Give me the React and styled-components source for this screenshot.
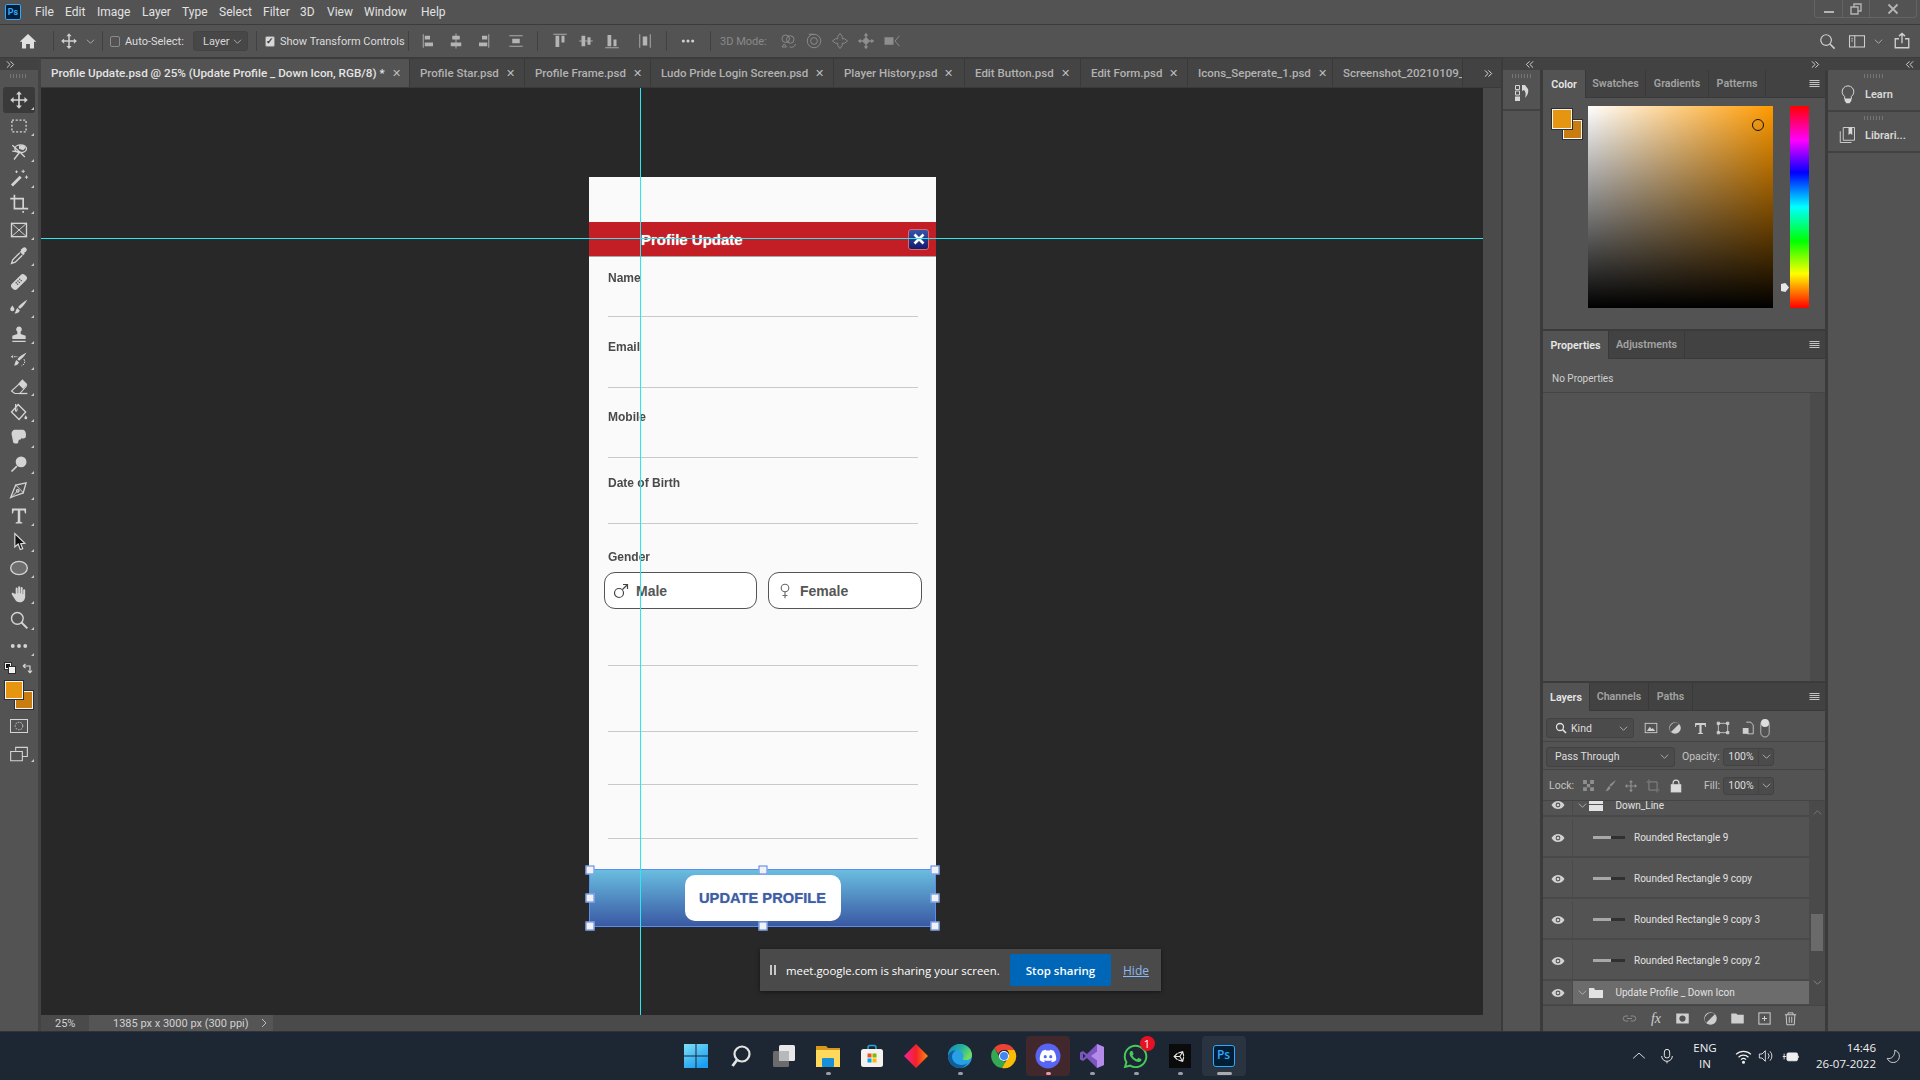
import React from "react";
import styled, { createGlobalStyle } from "styled-components";
import { FaDiscord, FaWhatsapp, FaUnity } from "react-icons/fa";

const ui = `Roboto, "Open Sans", sans-serif`;
const art = `"Liberation Sans", Arial, sans-serif`;

const GlobalStyle = createGlobalStyle`
  html, body { margin: 0; padding: 0; background: #535353; }
  * { box-sizing: border-box; }
`;

const Page = styled.div`
  width: 1920px;
  height: 1080px;
  display: flex;
  flex-direction: column;
  overflow: hidden;
  background: #3b3b3b;
  font-family: ${ui};
  font-size: 11.5px;
  color: #d6d6d6;
`;

/* top menu */
const MenuBar = styled.div`
  height: 25px;
  flex: none;
  display: flex;
  align-items: center;
  background: #535353;
  border-bottom: 1px solid #3c3c3c;
  padding-left: 5px;
  position: relative;
`;
const PsLogo = styled.div`
  width: 16px;
  height: 16px;
  margin-right: 14px;
  background: #001e36;
  border: 1px solid #31a8ff;
  border-radius: 2px;
  color: #31a8ff;
  font-size: 9px;
  font-weight: 700;
  line-height: 14px;
  text-align: center;
`;
const MenuItem = styled.div`
  width: ${(p) => p.$w}px;
  font-size: 12px;
  color: #e2e2e2;
`;
const WinControls = styled.div`
  margin-left: auto;
  margin-right: 3px;
  align-self: flex-start;
  display: flex;
  height: 18px;
  border: 1px solid #646464;
  border-top: 0;
  border-radius: 0 0 4px 4px;
`;
const WinButton = styled.div`
  width: ${(p) => p.$w}px;
  display: flex;
  align-items: center;
  justify-content: center;
  color: #b4b4b4;
  & + & { border-left: 1px solid #646464; }
`;

/* options bar */
const OptionsBar = styled.div`
  height: 33px;
  flex: none;
  display: flex;
  align-items: center;
  background: #535353;
  border-bottom: 1px solid #3c3c3c;
  padding-left: 15px;
  padding-right: 5px;
`;
const Slot = styled.div`
  width: ${(p) => p.$w || 26}px;
  margin-left: ${(p) => p.$ml || 0}px;
  flex: none;
  display: flex;
  align-items: center;
  justify-content: center;
  color: ${(p) => (p.$dim ? "#8e8e8e" : "#cfcfcf")};
`;
const Sep = styled.div`
  width: 1px;
  height: 20px;
  flex: none;
  background: #414141;
  margin-left: ${(p) => p.$ml}px;
`;
const CheckBox = styled.div`
  width: 10px;
  height: 11px;
  flex: none;
  margin-left: ${(p) => p.$ml}px;
  border: 1px solid #8a8a8a;
  border-radius: 2px;
  background: ${(p) => (p.$on ? "#d8d8d8" : "transparent")};
  color: #333;
  font-size: 9px;
  line-height: 9px;
  text-align: center;
  font-weight: 700;
`;
const OptLabel = styled.div`
  width: ${(p) => p.$w}px;
  margin-left: ${(p) => p.$ml}px;
  flex: none;
  white-space: nowrap;
  color: ${(p) => (p.$dim ? "#8a8a8a" : "#dcdcdc")};
  font-size: 11px;
`;
const LayerSelect = styled.div`
  width: 55px;
  height: 20px;
  margin-left: 15px;
  flex: none;
  display: flex;
  align-items: center;
  justify-content: space-between;
  padding: 0 5px 0 9px;
  background: #474747;
  border: 1px solid #434343;
  border-radius: 3px;
  font-size: 11px;
`;
const Spacer = styled.div`
  flex: 1;
`;

/* workspace */
const Workspace = styled.div`
  height: 973px;
  flex: none;
  display: flex;
`;
const ToolColumn = styled.div`
  width: 41px;
  flex: none;
  display: flex;
  flex-direction: column;
  background: #535353;
  border-right: 3px solid #434343;
`;
const CollapseStrip = styled.div`
  height: 12px;
  flex: none;
  display: flex;
  align-items: center;
  background: #424242;
  color: #cfcfcf;
  padding-left: ${(p) => p.$pl || 0}px;
  font-size: 10px;
`;
const Grip = styled.div`
  height: ${(p) => p.$h || 18}px;
  flex: none;
  display: flex;
  justify-content: center;
  padding-top: 4px;
  &::before {
    content: "";
    width: ${(p) => p.$w || 18}px;
    height: 4px;
    background: repeating-linear-gradient(90deg, #777 0 1px, transparent 1px 3px);
  }
`;
const ToolButton = styled.div`
  width: 32px;
  height: ${(p) => p.$h || 26}px;
  margin-left: 3px;
  flex: none;
  display: flex;
  align-items: center;
  justify-content: center;
  color: #d4d4d4;
  position: relative;
  border-radius: 3px;
  background: ${(p) => (p.$active ? "#3a3a3a" : "transparent")};
  &::after {
    content: "";
    display: ${(p) => (p.$corner ? "block" : "none")};
    position: absolute;
    right: 1px;
    bottom: 3px;
    border-left: 3px solid transparent;
    border-bottom: 3px solid #c8c8c8;
  }
`;
const SwatchStack = styled.div`
  position: relative;
  flex: none;
  width: ${(p) => p.$w}px;
  height: ${(p) => p.$h}px;
  margin-left: ${(p) => p.$ml}px;
  margin-top: ${(p) => p.$mt || 0}px;
`;
const Swatch = styled.div`
  position: absolute;
  left: ${(p) => p.$x}px;
  top: ${(p) => p.$y}px;
  width: ${(p) => p.$s}px;
  height: ${(p) => p.$s}px;
  background: ${(p) => p.$c};
  border: 1px solid #f4f4f4;
  outline: 1px solid #2e2e2e;
`;
const SwapArrow = styled.div`
  position: absolute;
  left: 19px;
  top: 2px;
  display: flex;
  color: #d4d4d4;
`;

/* document */
const DocColumn = styled.div`
  width: 1460px;
  flex: none;
  display: flex;
  flex-direction: column;
  margin-right: 2px;
`;
const TabRow = styled.div`
  height: 30px;
  flex: none;
  display: flex;
  background: #424242;
  border-top: 1px solid #3c3c3c;
  border-bottom: 1px solid #3a3a3a;
`;
const Tab = styled.div`
  width: ${(p) => p.$w}px;
  flex: none;
  display: flex;
  align-items: center;
  padding-left: 10px;
  gap: 7px;
  white-space: nowrap;
  overflow: hidden;
  font-size: ${(p) => (p.$active ? "11.7px" : "11.5px")};
  background: ${(p) => (p.$active ? "#535353" : "#444444")};
  color: ${(p) => (p.$active ? "#e4e4e4" : "#b2b2b2")};
  border-right: 1px solid #393939;
  font-weight: 500;
`;
const TabClose = styled.span`
  font-size: 11px;
  font-weight: 300;
  color: #bdbdbd;
`;
const TabMore = styled.div`
  flex: 1;
  display: flex;
  justify-content: flex-end;
  align-items: center;
  padding-right: 8px;
  color: #dcdcdc;
`;
const CanvasRow = styled.div`
  flex: 1;
  display: flex;
  min-height: 0;
`;
const Canvas = styled.div`
  flex: 1;
  position: relative;
  background: #282828;
  padding: 89px 0 0 548px;
  overflow: hidden;
`;
const VScroll = styled.div`
  width: 18px;
  flex: none;
  background: #4a4a4a;
`;
const StatusBar = styled.div`
  height: 16px;
  flex: none;
  display: flex;
  align-items: center;
  background: #4a4a4a;
  color: #d2d2d2;
  font-size: 11px;
`;
const StatusZoom = styled.div`
  width: 48px;
  padding-left: 14px;
`;
const StatusInfo = styled.div`
  width: 184px;
  height: 100%;
  display: flex;
  align-items: center;
  padding-left: 24px;
  background: #555555;
`;
const StatusArrow = styled.div`
  margin-left: -14px;
  display: flex;
  color: #bdbdbd;
`;
const GuideV = styled.div`
  position: absolute;
  left: 599px;
  top: 0;
  bottom: 0;
  width: 1px;
  background: #27e8ee;
`;
const GuideH = styled.div`
  position: absolute;
  left: 0;
  right: 0;
  top: 150px;
  height: 1px;
  background: #27e8ee;
`;

/* artboard */
const Artboard = styled.div`
  width: 347px;
  height: 750px;
  display: flex;
  flex-direction: column;
  background: #fafafa;
  font-family: ${art};
`;
const TopBlank = styled.div`
  height: 45px;
  flex: none;
`;
const RedHeader = styled.div`
  height: 35px;
  flex: none;
  display: flex;
  align-items: center;
  justify-content: space-between;
  padding: 0 7px 0 52px;
  background: #c31e26;
  border-bottom: 1px solid #a9a5a5;
  color: #fff;
  font-size: 15px;
  font-weight: 700;
  text-shadow: 0 0 1px rgba(255, 255, 255, 0.6);
`;
const CloseBtn = styled.div`
  width: 21px;
  height: 21px;
  display: flex;
  align-items: center;
  justify-content: center;
  border-radius: 3px;
  border: 1px solid #d56a70;
  background: linear-gradient(#3656a8, #141a6e);
  color: #fff;
`;
const Field = styled.div`
  height: ${(p) => p.$h}px;
  flex: none;
  margin: 0 18px 0 19px;
  padding-top: ${(p) => p.$pt || 0}px;
  border-bottom: 1px solid #c9c9c9;
`;
const FieldLabel = styled.div`
  height: 14px;
  line-height: 14px;
  font-size: 12px;
  font-weight: 700;
  color: #4a4a4a;
  filter: blur(0.3px);
`;
const GenderBlock = styled.div`
  height: 84px;
  flex: none;
  padding: 26px 14px 0 15px;
`;
const GenderLabel = styled(FieldLabel)`
  margin: 0 0 8px 4px;
`;
const GenderRow = styled.div`
  display: flex;
  gap: 11px;
`;
const GenderBtn = styled.div`
  width: ${(p) => p.$w}px;
  height: 37px;
  display: flex;
  align-items: center;
  background: #fff;
  border: 1.5px solid #555;
  border-radius: 11px;
  color: #555;
  font-size: 14px;
  font-weight: 700;
  padding-left: ${(p) => p.$pl}px;
  gap: ${(p) => p.$gap}px;
`;
const Footer = styled.div`
  margin-top: auto;
  height: 58px;
  flex: none;
  position: relative;
  display: flex;
  align-items: center;
  justify-content: center;
  background: linear-gradient(#69bde0, #3a59a3);
  border: 1px solid #5b8def;
`;
const UpdateBtn = styled.div`
  width: 156px;
  height: 46px;
  display: flex;
  align-items: center;
  justify-content: center;
  background: #fff;
  border-radius: 10px;
  color: #3f5da5;
  font-size: 14.7px;
  font-weight: 700;
  text-shadow: 0 0 1px rgba(63, 93, 165, 0.6);
`;
const Handle = styled.div`
  position: absolute;
  width: 9px;
  height: 9px;
  left: ${(p) => p.$x}%;
  top: ${(p) => p.$y}%;
  transform: translate(-50%, -50%);
  background: #f2f2f6;
  border: 1px solid #4f82e6;
`;
const ShareBar = styled.div`
  position: absolute;
  left: 719px;
  top: 861px;
  width: 401px;
  height: 42px;
  display: flex;
  align-items: center;
  padding-left: 10px;
  background: #4a4a4a;
  box-shadow: 0 1px 4px rgba(0, 0, 0, 0.5);
  font-family: "Open Sans", sans-serif;
  font-size: 12px;
  color: #fff;
`;
const PauseMark = styled.div`
  width: 6px;
  height: 10px;
  flex: none;
  border-left: 2px solid #c8c8c8;
  border-right: 2px solid #c8c8c8;
  margin-right: 10px;
`;
const ShareText = styled.div`
  width: 224px;
  flex: none;
  white-space: nowrap;
  font-size: 11.4px;
`;
const StopBtn = styled.div`
  width: 101px;
  height: 32px;
  flex: none;
  display: flex;
  align-items: center;
  justify-content: center;
  background: #0067b8;
  border-radius: 2px;
  font-weight: 600;
  font-size: 11.5px;
`;
const HideLink = styled.div`
  margin-left: 12px;
  color: #8db8ef;
  text-decoration: underline;
`;

/* side panels */
const SideArea = styled.div`
  flex: 1;
  display: flex;
  flex-direction: column;
  min-width: 0;
`;
const Chev = styled.div`
  margin-left: ${(p) => p.$ml}px;
  display: flex;
  color: #d2d2d2;
`;
const DockRow = styled.div`
  flex: 1;
  display: flex;
  gap: 3px;
  min-height: 0;
`;
const HistoryDock = styled.div`
  width: 37px;
  flex: none;
  background: #535353;
`;
const DockTile = styled.div`
  height: ${(p) => p.$h}px;
  border-bottom: 2px solid #424242;
  display: flex;
  flex-direction: column;
`;
const DockBody = styled.div`
  display: flex;
  align-items: center;
  padding-left: ${(p) => p.$pl}px;
  gap: ${(p) => p.$gap || 0}px;
  color: #d8d8d8;
  font-weight: 600;
  font-size: 11px;
`;
const MainPanels = styled.div`
  width: 282px;
  flex: none;
  display: flex;
  flex-direction: column;
  gap: 2px;
`;
const Panel = styled.div`
  height: ${(p) => p.$h}px;
  flex: none;
  display: flex;
  flex-direction: column;
  background: #535353;
`;
const PanelTabs = styled.div`
  height: 28px;
  flex: none;
  display: flex;
  background: #424242;
  border-bottom: 1px solid #3a3a3a;
  position: relative;
`;
const PanelTab = styled.div`
  width: ${(p) => p.$w}px;
  margin-bottom: ${(p) => (p.$active ? "-1px" : 0)};
  display: flex;
  align-items: center;
  justify-content: center;
  font-size: 10.7px;
  font-weight: 600;
  background: ${(p) => (p.$active ? "#535353" : "transparent")};
  color: ${(p) => (p.$active ? "#e6e6e6" : "#a2a2a2")};
  border-right: 1px solid #393939;
`;
const PanelMenu = styled.div`
  margin-left: auto;
  margin-right: 5px;
  display: flex;
  align-items: center;
  color: #c4c4c4;
`;
const ColorBody = styled.div`
  flex: 1;
  display: flex;
  padding: 8px 0 0 9px;
`;
const ColorField = styled.div`
  width: 185px;
  height: 202px;
  flex: none;
  margin-left: 6px;
  position: relative;
  background: linear-gradient(transparent, #000), linear-gradient(90deg, #fff, #ff9a00);
`;
const ColorPick = styled.div`
  position: absolute;
  left: 164px;
  top: 13px;
  width: 12px;
  height: 12px;
  border: 1px solid #111;
  border-radius: 50%;
`;
const HueColumn = styled.div`
  width: 19px;
  height: 202px;
  flex: none;
  margin-left: 17px;
  position: relative;
  background: linear-gradient(#f00, #f0f 17%, #00f 33%, #0ff 50%, #0f0 67%, #ff0 83%, #f00);
`;
const HueMark = styled.div`
  position: absolute;
  left: -9px;
  top: 177px;
  width: 8px;
  height: 9px;
  background: #e8e8e8;
  clip-path: polygon(0 10%, 55% 0, 100% 50%, 55% 100%, 0 90%);
`;
const NoProps = styled.div`
  height: 34px;
  flex: none;
  display: flex;
  align-items: center;
  padding: 6px 0 0 9px;
  font-size: 10px;
  color: #cfcfcf;
  border-bottom: 1px solid #444;
`;
const PropsBody = styled.div`
  flex: 1;
  display: flex;
  justify-content: flex-end;
`;
const PropsScroll = styled.div`
  width: 15px;
  background: #4b4b4b;
`;
const LayerRow = styled.div`
  height: ${(p) => p.$h}px;
  flex: none;
  display: flex;
  align-items: center;
  padding-left: ${(p) => p.$pl || 0}px;
  padding-top: ${(p) => p.$pt || 0}px;
  border-bottom: 1px solid #444;
  font-size: 11px;
`;
const SmallSelect = styled.div`
  width: ${(p) => p.$w}px;
  height: 20px;
  flex: none;
  display: flex;
  align-items: center;
  padding: 0 5px 0 ${(p) => p.$pl}px;
  gap: 4px;
  background: #4b4b4b;
  border: 1px solid #424242;
  border-radius: 3px;
  font-size: 10.5px;
  color: #dedede;
`;
const SelectArrow = styled.div`
  margin-left: auto;
  display: flex;
`;
const RowLabel = styled.div`
  width: ${(p) => p.$w}px;
  margin-left: ${(p) => p.$ml || 0}px;
  flex: none;
  font-size: 10.5px;
  color: #c4c4c4;
`;
const NumBox = styled.div`
  width: 51px;
  height: 18px;
  flex: none;
  display: flex;
  background: #4b4b4b;
  border: 1px solid #424242;
  border-radius: 3px;
  font-size: 10.5px;
  color: #dedede;
`;
const NumValue = styled.div`
  width: 35px;
  line-height: 16px;
  text-align: center;
  border-right: 1px solid #424242;
`;
const NumArrow = styled.div`
  flex: 1;
  display: flex;
  align-items: center;
  justify-content: center;
`;
const IconCell = styled.div`
  width: ${(p) => p.$w}px;
  margin-left: ${(p) => p.$ml || 0}px;
  flex: none;
  display: flex;
  justify-content: center;
  color: ${(p) => (p.$dim ? "#8f8f8f" : "#cfcfcf")};
`;
const LayerList = styled.div`
  height: 204px;
  flex: none;
  display: flex;
`;
const LayerRows = styled.div`
  width: 266px;
  flex: none;
  overflow: hidden;
`;
const Layer = styled.div`
  height: ${(p) => p.$h}px;
  margin-top: ${(p) => p.$mt || 0}px;
  padding-top: ${(p) => p.$pt || 0}px;
  display: flex;
  align-items: center;
  margin-bottom: 2px;
  font-size: 10px;
  color: #e2e2e2;
  background: #535353;
  box-shadow: 0 2px 0 #494949;
`;
const EyeCell = styled.div`
  width: 30px;
  height: 100%;
  flex: none;
  display: flex;
  align-items: center;
  justify-content: center;
  border-right: 1px solid #4a4a4a;
  color: #d2d2d2;
`;
const LayerBody = styled.div`
  flex: 1;
  height: 100%;
  display: flex;
  align-items: center;
  padding-left: ${(p) => p.$pl}px;
  background: ${(p) => (p.$sel ? "#6c6c6c" : "transparent")};
`;
const GroupName = styled.div`
  margin-left: 12px;
  white-space: nowrap;
`;
const LineThumb = styled.div`
  width: 32px;
  height: 3px;
  flex: none;
  margin-right: 9px;
  background: linear-gradient(90deg, #a8a8a8 55%, #303030 55%);
`;
const ListScroll = styled.div`
  flex: 1;
  background: #4a4a4a;
  display: flex;
  flex-direction: column;
  align-items: center;
  color: #7b7b7b;
  padding-top: 7px;
`;
const ScrollThumb = styled.div`
  width: 12px;
  height: 37px;
  margin-top: 97px;
  background: #6a6a6a;
`;
const ScrollDown = styled.div`
  margin-top: 27px;
  display: flex;
`;
const LayerFooter = styled.div`
  flex: 1;
  display: flex;
  align-items: center;
  padding-left: 78px;
  border-top: 1px solid #444;
`;
const RightDock = styled.div`
  flex: 1;
  background: #535353;
`;

/* taskbar */
const Taskbar = styled.div`
  height: 49px;
  flex: none;
  display: flex;
  align-items: center;
  position: relative;
  justify-content: center;
  padding-right: 1px;
  background: #1d2733;
  border-top: 1px solid #30343a;
  color: #f0f0f0;
`;
const TaskIcon = styled.div`
  width: 44px;
  height: 40px;
  flex: none;
  position: relative;
  display: flex;
  align-items: center;
  justify-content: center;
  border-radius: 4px;
  background: ${(p) => p.$bg || "transparent"};
  &::after {
    content: "";
    display: ${(p) => (p.$dot ? "block" : "none")};
    position: absolute;
    bottom: 1px;
    left: 50%;
    width: ${(p) => (p.$wide ? 15 : 5)}px;
    height: 3px;
    margin-left: ${(p) => (p.$wide ? -7 : -2)}px;
    border-radius: 2px;
    background: ${(p) => p.$dot};
  }
`;
const Badge = styled.div`
  position: absolute;
  top: 0;
  right: 3px;
  width: 15px;
  height: 15px;
  border-radius: 50%;
  background: #e81123;
  color: #fff;
  font-family: "Open Sans", sans-serif;
  font-size: 11px;
  line-height: 15px;
  text-align: center;
`;
const Tray = styled.div`
  position: absolute;
  right: 0;
  top: 0;
  bottom: 0;
  display: flex;
  align-items: center;
  font-family: "Open Sans", sans-serif;
  font-size: 11.5px;
`;
const TrayCell = styled.div`
  width: ${(p) => p.$w}px;
  padding-right: ${(p) => p.$pr || 0}px;
  flex: none;
  display: flex;
  justify-content: center;
`;
const TrayText = styled.div`
  width: ${(p) => p.$w}px;
  flex: none;
  line-height: 16px;
  text-align: ${(p) => p.$align};
`;
const PsTile = styled.div`
  width: 22px;
  height: 22px;
  background: #001e36;
  border: 1.5px solid #31a8ff;
  border-radius: 3px;
  color: #31a8ff;
  font-family: "Open Sans", sans-serif;
  font-weight: 600;
  font-size: 12px;
  line-height: 18px;
  text-align: center;
`;
const UnityTile = styled.div`
  width: 22px;
  height: 24px;
  display: flex;
  align-items: center;
  justify-content: center;
  background: #0b0b0b;
  color: #e6e6e6;
`;

/* icon helpers */
const Svg = ({ s = 20, w, h, vb = "0 0 24 24", children, ...rest }) => (
  <svg width={w || s} height={h || s} viewBox={vb} fill="none" stroke="currentColor" strokeWidth="1.6" {...rest}>
    {children}
  </svg>
);
const F = (d) => <path d={d} fill="currentColor" stroke="none" />;
const Chevron = ({ s = 9, up, c }) => (
  <Svg s={s} vb="0 0 10 10" strokeWidth="1" style={{ color: c || "#b5b5b5" }}>
    <path d={up ? "M1 7l4-4 4 4" : "M1 3l4 4 4-4"} />
  </Svg>
);
const Double = ({ left }) => (
  <Svg s={9} vb="0 0 10 10" strokeWidth="1.1">
    <path d={left ? "M5 1.5L1.5 5 5 8.5M9 1.5L5.5 5 9 8.5" : "M1 1.5L4.5 5 1 8.5M5 1.5L8.5 5 5 8.5"} />
  </Svg>
);
const Burger = () => (
  <Svg s={11} vb="0 0 11 11" strokeWidth="1">
    <path d="M0.5 2.5h10M0.5 4.5h10M0.5 6.5h10M0.5 8.5h10" />
  </Svg>
);
const Eye = () => (
  <Svg s={14} vb="0 0 14 14" stroke="none">
    <path fill="currentColor" fillRule="evenodd" d="M0.5 7C2.5 4 4.6 3 7 3s4.500 1 6.500 4C11.500 10 9.400 11 7 11S2.500 10 0.500 7zM7 4.600a2.400 2.400 0 100 4.800 2.400 2.400 0 000-4.800z" />
    <circle cx="7" cy="7" r="1.300" fill="currentColor" />
  </Svg>
);
const FolderIco = ({ open }) => (
  <Svg w={14} h={11} vb="0 0 14 11" stroke="none">
    <path fill="currentColor" d={open ? "M0 1h5l1 2h8v8H0z" : "M0 0h14v4H0zM0 5h14v6H0z"} />
  </Svg>
);
const MoveIco = ({ s = 20 }) => (
  <Svg s={s} stroke="none">
    {F("M12 1.500l3.500 4H13V11h5.500V8.500l4 3.500-4 3.500V13H13v5.500h2.500l-3.500 4-3.500-4H11V13H5.500v2.500l-4-3.500 4-3.500V11H11V5.500H8.500z")}
  </Svg>
);

const tools = [
  <MoveIco />,
  <Svg><rect x="3.500" y="5" width="17" height="14" strokeDasharray="2.500 2" /></Svg>,
  <Svg><ellipse cx="14" cy="8" rx="7" ry="4.500" />{F("M12 4h6l2 3-3 3-5-2z")}<path d="M4 4l9 8-7 9M4 11l9 1 6 6" /></Svg>,
  <Svg><path d="M3.500 21L14 10.500" strokeWidth="3.400" /><path d="M17 2v4M15 4h4M21 9v4M19 11h4M9 3v3M7.500 4.500h3" strokeWidth="1.200" /></Svg>,
  <Svg strokeWidth="2"><path d="M1.500 5.500h5M6.500 1v16.500H20M6.500 5.500H17V17M20 17.500h3M17 20.500v2" /></Svg>,
  <Svg><rect x="3" y="4" width="18" height="16" /><path d="M3 4l18 16M21 4L3 20" strokeWidth="1.200" /></Svg>,
  <Svg>{F("M15 5l4 4-2 2-4-4zM16.500 2.500a2.500 2.500 0 014 4l-2.500 2-4-4z")}<path d="M13 8l-8.500 8.500L3 21l4.500-1.500L16 11" /></Svg>,
  <Svg><g transform="rotate(-45 12 12)"><rect x="1" y="7.500" width="22" height="9" rx="3.500" fill="currentColor" stroke="none" /><path d="M9 9.500v5M12 9.500v5M15 9.500v5" stroke="#535353" strokeDasharray="1.500 1" /></g></Svg>,
  <Svg stroke="none">{F("M22 2c-2 4-6 9-9 11l-2-2c2-3 7-7 11-9zM10 12l3 3c-1 3-4 4-6.500 3.500C8.500 17 8 14 10 12zM4 9c1 2 2.500 3 2.500 4.500a2.500 2.500 0 01-5 0C1.500 12 3 11 4 9z")}</Svg>,
  <Svg stroke="none">{F("M12 3a3.500 3.500 0 012 6.300V12l6 2v4H4v-4l6-2V9.300A3.500 3.500 0 0112 3zM4 20h16v1.500H4z")}</Svg>,
  <Svg stroke="none"><path d="M21 3c-2 4-6 8-9 10l-2-2c2-3 7-6 11-8zM9 12l3 3c-1 3-4 4-6 3.500C7.500 17 7 14 9 12z" fill="currentColor" /><path d="M3 8h7M3 8l2.500-2M3 8l2.500 2M18 11l1 3-1 3-3 2" stroke="currentColor" strokeWidth="1.200" strokeDasharray="2 1" fill="none" /></Svg>,
  <Svg><path d="M3 18l4 3h6l8-9-5-6z" strokeWidth="1.300" />{F("M16 4l6 6-5 5.500-6-6z")}<path d="M12 21h10" /></Svg>,
  <Svg><path d="M11 3l9 9-8 9-9-9z" />{F("M11 3l-1 8-2 1 4-9zM20 12v4l2 3a1.800 1.800 0 11-3.600 0l1.600-3z")}<path d="M8 2.500v9" /></Svg>,
  <Svg stroke="none">{F("M7 2h10c3 1 4 5 3 9-2 2-4 2-5 1l-1 2c-2-1-3 1-3 4-2 1-5 1-6-1L3 7c0-3 2-5 4-5z")}</Svg>,
  <Svg>{F("M14.500 3a6.500 6.500 0 110 13 6.500 6.500 0 010-13z")}<path d="M9.500 14.500L3 21" strokeWidth="2" /></Svg>,
  <Svg><path d="M20.500 3.500L8 6 3.500 17l-1.500 4 4-1.500L17 15.500z" /><circle cx="10.500" cy="13" r="1.500" /><path d="M2.500 21l7-7M8 6l10 10" strokeWidth="1.200" /></Svg>,
  <Svg stroke="none">{F("M3.500 3h17v6h-1.300l-1-3.500H13.500V19l2.500.8V21H8v-1.200l2.500-.8V5.500H5.800l-1 3.500H3.500z")}</Svg>,
  <Svg stroke="#dedede" strokeWidth="1.400"><path d="M7 2v16l4-3.500 2.500 6.500 3-1-2.500-6 5-.5z" fill="#111" /></Svg>,
  <Svg><ellipse cx="12" cy="12" rx="10" ry="8" fill="#6e6e6e" /></Svg>,
  <Svg stroke="none">{F("M8 12V5.500a1.200 1.200 0 012.400 0V11h.6V3.800a1.200 1.200 0 012.400 0V11h.6V4.800a1.200 1.200 0 012.400 0V12h.6V7.500a1.200 1.200 0 012.400 0V15c0 4-2.500 7-6.500 7-3 0-4.500-1.500-6-4l-3.500-5.500c-.7-1.500 1-2.500 2-1.500z")}</Svg>,
  <Svg strokeWidth="1.700"><circle cx="10" cy="10" r="7" /><path d="M15 15l7 7" strokeWidth="2.400" /></Svg>,
  <Svg stroke="none"><circle cx="4.500" cy="12" r="2.300" fill="currentColor" /><circle cx="12" cy="12" r="2.300" fill="currentColor" /><circle cx="19.500" cy="12" r="2.300" fill="currentColor" /></Svg>,
];

// guide line, then the filled bars of each align button
const alignIcons = [
  ["M3 3v18", "M5 5h7v5H5zM5 14h11v5H5z"],
  ["M12 2v20", "M7 5h10v5H7zM5 14h14v5H5z"],
  ["M21 3v18", "M12 5h7v5h-7zM8 14h11v5H8z"],
  ["M3 5h18M3 19h18", "M7 9h10v6H7z"],
  ["M3 3h18", "M6 5h5v15H6zM14 5h4v9h-4z"],
  ["M3 12h18", "M6 5h5v14H6zM14 7h4v10h-4z"],
  ["M3 21h18", "M6 4h5v15H6zM14 10h4v9h-4z"],
  ["M5 3v18M19 3v18", "M9 6h6v12H9z"],
];
const Align = ({ d }) => (
  <Svg s={18} strokeWidth="1.200" style={{ color: "#b4b4b4" }}>
    <path d={d[0]} />
    {F(d[1])}
  </Svg>
);

const tabs = [
  ["Profile Update.psd @ 25% (Update Profile _ Down Icon, RGB/8) *", 369, true],
  ["Profile Star.psd", 115],
  ["Profile Frame.psd", 126],
  ["Ludo Pride Login Screen.psd", 183],
  ["Player History.psd", 131],
  ["Edit Button.psd", 116],
  ["Edit Form.psd", 107],
  ["Icons_Seperate_1.psd", 145],
];
const menus = [["File", 30], ["Edit", 32], ["Image", 45], ["Layer", 40], ["Type", 37], ["Select", 44], ["Filter", 37], ["3D", 27], ["View", 37], ["Window", 57], ["Help", 40]];

const Male = () => (
  <Svg s={16} vb="0 0 16 16" strokeWidth="1.200" style={{ color: "#444" }}>
    <circle cx="6" cy="10" r="4.500" />
    <path d="M9.500 6.500L14.500 1.500M10 1.500h4.500V6" />
  </Svg>
);
const Female = () => (
  <Svg s={16} vb="0 0 16 16" strokeWidth="1.100" style={{ color: "#666" }}>
    <circle cx="8" cy="5" r="3.800" />
    <path d="M8 8.800v6.500M5.500 12.500h5" />
  </Svg>
);

const WinLogo = () => (
  <svg width="24" height="24" viewBox="0 0 24 24">
    <defs>
      <linearGradient id="wl" x1="0" y1="0" x2="0.6" y2="1">
        <stop offset="0" stopColor="#7fe0f7" />
        <stop offset="1" stopColor="#1a9ff0" />
      </linearGradient>
    </defs>
    <path fill="url(#wl)" d="M0 0h11.500v11.500H0zM12.500 0H24v11.500H12.500zM0 12.500h11.500V24H0zM12.500 12.500H24V24H12.500z" />
  </svg>
);
const TaskSearch = () => (
  <Svg s={24} strokeWidth="2.200" style={{ color: "#e4e4e4" }}>
    <circle cx="14" cy="10" r="7.500" />
    <path d="M9 16l-4.500 6" strokeWidth="2.800" />
  </Svg>
);
const TaskView = () => (
  <svg width="24" height="24" viewBox="0 0 24 24">
    <rect x="7" y="1" width="16" height="16" rx="1.500" fill="#e8e8e8" />
    <rect x="1" y="7" width="16" height="16" rx="1.500" fill="#6b6b6b" />
    <rect x="7" y="7" width="10" height="10" fill="#b9b9b9" />
  </svg>
);
const Explorer = () => (
  <svg width="26" height="26" viewBox="0 0 26 26">
    <path fill="#d59a1b" d="M1 3h10l2 2h12v18H1z" />
    <path fill="#ffd95c" d="M1 7h24v17H1z" />
    <rect x="7" y="15" width="12" height="9" rx="1" fill="#1790d8" />
  </svg>
);
const Store = () => (
  <svg width="24" height="24" viewBox="0 0 24 24">
    <path d="M8 5V3.500A2 2 0 0110 1.500h4a2 2 0 012 2V5" fill="none" stroke="#25a5d8" strokeWidth="1.500" />
    <rect x="1" y="5" width="22" height="18" rx="2.500" fill="#f4f2ee" />
    <path fill="#f25022" d="M7.500 9.500h4v4h-4z" />
    <path fill="#7fba00" d="M12.500 9.500h4v4h-4z" />
    <path fill="#00a4ef" d="M7.500 14.500h4v4h-4z" />
    <path fill="#ffb900" d="M12.500 14.500h4v4h-4z" />
  </svg>
);
const Diamond = () => (
  <svg width="26" height="26" viewBox="0 0 26 26">
    <defs>
      <linearGradient id="dm" x1="0" y1="0" x2="1" y2="0">
        <stop offset="0" stopColor="#f0249a" />
        <stop offset="0.5" stopColor="#f5202b" />
        <stop offset="1" stopColor="#fb8a10" />
      </linearGradient>
    </defs>
    <path fill="url(#dm)" d="M13 1l12 12-12 12L1 13z" />
  </svg>
);
const Edge = () => (
  <svg width="26" height="26" viewBox="0 0 26 26">
    <defs>
      <linearGradient id="eg" x1="0" y1="0" x2="1" y2="0.5">
        <stop offset="0" stopColor="#1583c6" />
        <stop offset="0.55" stopColor="#23b0a0" />
        <stop offset="1" stopColor="#6fdc62" />
      </linearGradient>
    </defs>
    <circle cx="13" cy="13" r="12" fill="#27a0e6" />
    <path fill="url(#eg)" d="M1 13C1 6 6.500 1 13 1c7 0 12 5.500 12 11 0 3-2.500 5-6 5-2 0-3.500-.5-3.500-1.500 0-.5 1-1 1-2.500 0-3-3-5.500-6.500-5.500C5.500 7.500 1.500 10 1 13z" />
    <path fill="#0f5f9f" d="M13 25C6 25 1 19.500 1 13c1-4 5-6 8-5.500-2.500 1-4 3.500-4 6 0 5 5 9 10 8.500 2 0 4-1 5.500-2-2 3-5 5-7.500 5z" />
  </svg>
);
const Chrome = () => (
  <svg width="26" height="26" viewBox="0 0 26 26">
    <path fill="#ea4335" d="M13 1a12 12 0 0110.400 6H13a6 6 0 00-5.700 4L3.300 5A12 12 0 0113 1z" />
    <path fill="#34a853" d="M3.300 5l5.200 9a6 6 0 006.500 4.700L11 25A12 12 0 013.300 5z" />
    <path fill="#fbbc05" d="M23.400 7A12 12 0 0111 25l5.200-9a6 6 0 00-.2-9z" />
    <circle cx="13" cy="13" r="5" fill="#fff" />
    <circle cx="13" cy="13" r="4" fill="#4285f4" />
  </svg>
);
const Discord = () => (
  <svg width="26" height="26" viewBox="0 0 26 26">
    <circle cx="13" cy="13" r="12.500" fill="#5865f2" />
    <svg x="4" y="4" width="18" height="18">
      <FaDiscord size={18} color="#fff" />
    </svg>
  </svg>
);
const VsLogo = () => (
  <svg width="24" height="26" viewBox="0 0 24 26">
    <path fill="#7d55c0" d="M17 1l7 3v18l-7 3L7 15l-4 3-3-1.500v-7L3 8l4 3z" />
    <path fill="#b48be8" d="M17 1l7 3v18l-7 3zM17 8.500L11 13l6 4.500z" />
    <path fill="#1d2733" d="M3 10.500v5l2.500-2.500z" />
  </svg>
);

export default function App() {
  return (
    <Page>
      <GlobalStyle />
      <MenuBar>
        <PsLogo>Ps</PsLogo>
        {menus.map(([m, w]) => (
          <MenuItem key={m} $w={w}>{m}</MenuItem>
        ))}
        <WinControls>
          <WinButton $w={27}>
            <Svg s={12} vb="0 0 12 12" strokeWidth="2"><path d="M1 9h10" /></Svg>
          </WinButton>
          <WinButton $w={27}>
            <Svg s={12} vb="0 0 12 12" strokeWidth="1.400"><path d="M1 4h7v7H1zM4 4V1h7v7H8" /></Svg>
          </WinButton>
          <WinButton $w={47}>
            <Svg s={12} vb="0 0 12 12" strokeWidth="1.800"><path d="M1.500 1.500l9 9M10.500 1.500l-9 9" /></Svg>
          </WinButton>
        </WinControls>
      </MenuBar>

      <OptionsBar>
        <Slot $w={26} style={{ color: "#e0e0e0" }}>
          <Svg s={18} stroke="none">{F("M12 2.500L23 13h-3v9h-5.500v-6h-5v6H4v-9H1z")}</Svg>
        </Slot>
        <Sep $ml={12} />
        <Slot $w={30}><MoveIco s={18} /></Slot>
        <Slot $w={12}><Chevron /></Slot>
        <Sep $ml={6} />
        <CheckBox $ml={7} />
        <OptLabel $w={53} $ml={5}>Auto-Select:</OptLabel>
        <LayerSelect>Layer<Chevron /></LayerSelect>
        <Sep $ml={8} />
        <CheckBox $ml={8} $on>✓</CheckBox>
        <OptLabel $w={112} $ml={5}>Show Transform Controls</OptLabel>
        <Sep $ml={16} />
        <Slot $ml={8}><Align d={alignIcons[0]} /></Slot>
        <Slot><Align d={alignIcons[1]} /></Slot>
        <Slot><Align d={alignIcons[2]} /></Slot>
        <Slot $ml={8}><Align d={alignIcons[3]} /></Slot>
        <Sep $ml={8} />
        <Slot $ml={9}><Align d={alignIcons[4]} /></Slot>
        <Slot><Align d={alignIcons[5]} /></Slot>
        <Slot><Align d={alignIcons[6]} /></Slot>
        <Slot $ml={7}><Align d={alignIcons[7]} /></Slot>
        <Sep $ml={8} />
        <Slot $ml={8}>
          <Svg s={16} stroke="none"><circle cx="5" cy="12" r="2.300" fill="currentColor" /><circle cx="12" cy="12" r="2.300" fill="currentColor" /><circle cx="19" cy="12" r="2.300" fill="currentColor" /></Svg>
        </Slot>
        <Sep $ml={9} />
        <OptLabel $w={40} $ml={9} $dim>3D Mode:</OptLabel>
        <Slot $ml={15} $dim><Svg s={18} strokeWidth="1.200"><circle cx="9" cy="9" r="5" /><circle cx="15" cy="10" r="5" /><path d="M4 20l3-4 3 4zM14 20c3 1 7 0 8-4" /></Svg></Slot>
        <Slot $dim><Svg s={18} strokeWidth="1.200"><circle cx="12" cy="12" r="9" /><circle cx="12" cy="12" r="4.500" /><path d="M5 3h6" /></Svg></Slot>
        <Slot $dim><Svg s={18} strokeWidth="1.200"><path d="M12 2l3 4v3h3l4 3-4 3h-3v3l-3 4-3-4v-3H6l-4-3 4-3h3V6z" /></Svg></Slot>
        <Slot $dim><Svg s={18} stroke="none">{F("M12 1l3 4h-2v3a4 4 0 013 3h3V9l4 3-4 3v-2h-3a4 4 0 01-3 3v3h2l-3 4-3-4h2v-3a4 4 0 01-3-3H5v2l-4-3 4-3v2h3a4 4 0 013-3V5H9z")}</Svg></Slot>
        <Slot $dim><Svg s={18} strokeWidth="1.200">{F("M2 7h12v10H2z")}<path d="M22 5l-6 7 6 7" /></Svg></Slot>
        <Spacer />
        <Slot><Svg s={17} strokeWidth="1.700"><circle cx="10" cy="10" r="7.500" /><path d="M15.500 15.500L22 22" strokeWidth="2.200" /></Svg></Slot>
        <Slot $ml={4}><Svg s={18} strokeWidth="1.400"><rect x="2" y="5" width="20" height="15" /><path d="M9 5v15M4.500 9h2M4.500 12h2" /></Svg></Slot>
        <Slot $w={12} $ml={2}><Chevron /></Slot>
        <Slot $ml={5}><Svg s={18} strokeWidth="1.800"><path d="M8 9H3v12h18V9h-5M12 15V2M8 5.500L12 2l4 3.500" /></Svg></Slot>
      </OptionsBar>

      <Workspace>
        <ToolColumn>
          <CollapseStrip $pl={6}><Double /></CollapseStrip>
          <Grip $h={17} />
          {tools.map((t, i) => (
            <ToolButton key={i} $active={i === 0} $corner>
              {t}
            </ToolButton>
          ))}
          <SwatchStack $w={32} $h={16} $ml={3} $mt={2}>
            <Swatch $x={2} $y={2} $s={6} $c="#111" />
            <Swatch $x={6} $y={6} $s={6} $c="#eee" />
            <SwapArrow>
              <Svg s={12} vb="0 0 12 12" strokeWidth="1.200"><path d="M1 3h7v7M1 3l2.500-2M1 3l2.500 2M8 10l-2-2.500M8 10l2-2.500" /></Svg>
            </SwapArrow>
          </SwatchStack>
          <SwatchStack $w={32} $h={28} $ml={5} $mt={4}>
            <Swatch $x={10} $y={10} $s={18} $c="#c97c10" />
            <Swatch $x={0} $y={0} $s={18} $c="#e69510" />
          </SwatchStack>
          <ToolButton $h={34}>
            <Svg w={18} h={14} vb="0 0 18 14" strokeWidth="1">
              <rect x="0.500" y="0.500" width="17" height="13" />
              <circle cx="9" cy="7" r="3.800" strokeDasharray="1.500 1.200" />
            </Svg>
          </ToolButton>
          <ToolButton $h={22} $corner>
            <Svg s={20} strokeWidth="1.300"><path d="M8 8V4h14v11h-6M2 9h14v11H2z" /></Svg>
          </ToolButton>
        </ToolColumn>

        <DocColumn>
          <TabRow>
            {tabs.map(([label, w, active]) => (
              <Tab key={label} $w={w} $active={active}>
                {label}<TabClose>✕</TabClose>
              </Tab>
            ))}
            <Tab $w={130}>Screenshot_20210109_</Tab>
            <TabMore><Double /></TabMore>
          </TabRow>
          <CanvasRow>
            <Canvas>
              <Artboard>
                <TopBlank />
                <RedHeader>
                  Profile Update
                  <CloseBtn>
                    <Svg s={12} vb="0 0 12 12" strokeWidth="2.600"><path d="M1.500 1.500l9 9M10.500 1.500l-9 9" /></Svg>
                  </CloseBtn>
                </RedHeader>
                <Field $h={60} $pt={14}><FieldLabel>Name</FieldLabel></Field>
                <Field $h={71} $pt={23}><FieldLabel>Email</FieldLabel></Field>
                <Field $h={70} $pt={22}><FieldLabel>Mobile</FieldLabel></Field>
                <Field $h={66} $pt={18}><FieldLabel>Date of Birth</FieldLabel></Field>
                <GenderBlock>
                  <GenderLabel>Gender</GenderLabel>
                  <GenderRow>
                    <GenderBtn $w={153} $pl={8} $gap={7}><Male />Male</GenderBtn>
                    <GenderBtn $w={154} $pl={8} $gap={7}><Female />Female</GenderBtn>
                  </GenderRow>
                </GenderBlock>
                <Field $h={58} />
                <Field $h={66} />
                <Field $h={53} />
                <Field $h={54} />
                <Footer>
                  <UpdateBtn>UPDATE PROFILE</UpdateBtn>
                  {[[0, 0], [50, 0], [100, 0], [0, 50], [100, 50], [0, 100], [50, 100], [100, 100]].map(([x, y]) => (
                    <Handle key={`${x}-${y}`} $x={x} $y={y} />
                  ))}
                </Footer>
              </Artboard>
              <GuideV />
              <GuideH />
              <ShareBar>
                <PauseMark />
                <ShareText>meet.google.com is sharing your screen.</ShareText>
                <StopBtn>Stop sharing</StopBtn>
                <HideLink>Hide</HideLink>
              </ShareBar>
            </Canvas>
            <VScroll />
          </CanvasRow>
          <StatusBar>
            <StatusZoom>25%</StatusZoom>
            <StatusInfo>1385 px x 3000 px (300 ppi)</StatusInfo>
            <StatusArrow>
              <Svg s={10} vb="0 0 10 10" strokeWidth="1"><path d="M3 1l4 4-4 4" /></Svg>
            </StatusArrow>
          </StatusBar>
        </DocColumn>

        <SideArea>
          <CollapseStrip $pl={22}>
            <Chev $ml={0}><Double left /></Chev>
            <Chev $ml={277}><Double /></Chev>
            <Chev $ml={85}><Double left /></Chev>
          </CollapseStrip>
          <DockRow>
            <HistoryDock>
              <DockTile $h={41}>
                <Grip $h={14} $w={20} />
                <DockBody $pl={11}>
                  <Svg s={17} vb="0 0 17 17" strokeWidth="1">
                    <path d="M1.500 1.500h4v4h-4zM1.500 7h4v4h-4z" />
                    {F("M1 12.500h5v4.500H1z")}
                    <path d="M8 1l3 0 3 4c1 4-1 7-3 9 1-3 1-6-1-8l-2 1z" fill="currentColor" stroke="none" />
                  </Svg>
                </DockBody>
              </DockTile>
            </HistoryDock>

            <MainPanels>
              <Panel $h={259}>
                <PanelTabs>
                  <PanelTab $w={43} $active>Color</PanelTab>
                  <PanelTab $w={60}>Swatches</PanelTab>
                  <PanelTab $w={63}>Gradients</PanelTab>
                  <PanelTab $w={57}>Patterns</PanelTab>
                  <PanelMenu><Burger /></PanelMenu>
                </PanelTabs>
                <ColorBody>
                  <SwatchStack $w={30} $h={30} $ml={0} $mt={3}>
                    <Swatch $x={11} $y={11} $s={19} $c="#c97c10" />
                    <Swatch $x={0} $y={0} $s={20} $c="#e69510" />
                  </SwatchStack>
                  <ColorField><ColorPick /></ColorField>
                  <HueColumn><HueMark /></HueColumn>
                </ColorBody>
              </Panel>

              <Panel $h={350}>
                <PanelTabs>
                  <PanelTab $w={66} $active>Properties</PanelTab>
                  <PanelTab $w={76}>Adjustments</PanelTab>
                  <PanelMenu><Burger /></PanelMenu>
                </PanelTabs>
                <NoProps>No Properties</NoProps>
                <PropsBody><PropsScroll /></PropsBody>
              </Panel>

              <Panel $h={348}>
                <PanelTabs>
                  <PanelTab $w={47} $active>Layers</PanelTab>
                  <PanelTab $w={59}>Channels</PanelTab>
                  <PanelTab $w={44}>Paths</PanelTab>
                  <PanelMenu><Burger /></PanelMenu>
                </PanelTabs>
                <LayerRow $h={31} $pl={3} $pt={4}>
                  <SmallSelect $w={88} $pl={8}>
                    <Svg s={12} strokeWidth="2.600"><circle cx="10" cy="10" r="7" /><path d="M15 15l7 7" strokeWidth="3.500" /></Svg>
                    Kind
                    <SelectArrow><Chevron /></SelectArrow>
                  </SmallSelect>
                  <IconCell $w={16} $ml={9}><Svg s={14} strokeWidth="1.500"><rect x="2" y="4" width="20" height="16" />{F("M5 17l5-7 3 4 2-2 4 5z")}</Svg></IconCell>
                  <IconCell $w={16} $ml={8}><Svg s={14} stroke="none"><circle cx="12" cy="12" r="10" fill="currentColor" /><path d="M5 19L19 5a10 10 0 00-14 14z" fill="#535353" /></Svg></IconCell>
                  <IconCell $w={16} $ml={9}><Svg s={13} stroke="none">{F("M2 2h20v7h-1.500l-1-3.500H14V20l3 1v1H7v-1l3-1V5.500H4.500l-1 3.500H2z")}</Svg></IconCell>
                  <IconCell $w={16} $ml={7}><Svg s={14} strokeWidth="1.500"><path d="M4 4h16v16H4z" /><path d="M2 2h4v4H2zM18 2h4v4h-4zM2 18h4v4H2zM18 18h4v4h-4z" fill="currentColor" /></Svg></IconCell>
                  <IconCell $w={16} $ml={9}><Svg s={14} strokeWidth="1.500"><path d="M9 2h8l4 5v15H11" />{F("M3 12h10v10H3z")}</Svg></IconCell>
                  <IconCell $w={10} $ml={4}>
                    <Svg w={10} h={20} vb="0 0 10 20" strokeWidth="0.800">
                      <rect x="0.800" y="2" width="8.400" height="17" rx="4.200" />
                      <circle cx="5" cy="5" r="4" fill="#dedede" stroke="none" />
                    </Svg>
                  </IconCell>
                </LayerRow>
                <LayerRow $h={28} $pl={3} $pt={2}>
                  <SmallSelect $w={129} $pl={8}>
                    Pass Through
                    <SelectArrow><Chevron /></SelectArrow>
                  </SmallSelect>
                  <RowLabel $w={41} $ml={7}>Opacity:</RowLabel>
                  <NumBox>
                    <NumValue>100%</NumValue>
                    <NumArrow><Chevron /></NumArrow>
                  </NumBox>
                </LayerRow>
                <LayerRow $h={31} $pl={6} $pt={1}>
                  <RowLabel $w={27}>Lock:</RowLabel>
                  <IconCell $w={14} $ml={5} $dim><Svg s={13} stroke="none">{F("M2 2h7v7H2zM15 2h7v7h-7zM9 9h6v6H9zM2 15h7v7H2zM15 15h7v7h-7z")}</Svg></IconCell>
                  <IconCell $w={14} $ml={8} $dim><Svg s={14} stroke="none">{F("M22 2c-2 4-6 9-9 11l-2-2c2-3 7-7 11-9zM10 12l3 3c-1 3-5 6-9 6 3-2 3-6 6-9z")}</Svg></IconCell>
                  <IconCell $w={14} $ml={7} $dim><MoveIco s={14} /></IconCell>
                  <IconCell $w={14} $ml={8} $dim><Svg s={14} strokeWidth="1.500"><path d="M5 5h14v14H5zM1 5h3M5 1v3M20 19h3M19 20v3" /></Svg></IconCell>
                  <IconCell $w={14} $ml={9} style={{ color: "#dcdcdc" }}><Svg s={14} strokeWidth="2"><rect x="4" y="10" width="16" height="12" fill="currentColor" /><path d="M7 10V7a5 5 0 0110 0v3" /></Svg></IconCell>
                  <RowLabel $w={19} $ml={21}>Fill:</RowLabel>
                  <NumBox>
                    <NumValue>100%</NumValue>
                    <NumArrow><Chevron /></NumArrow>
                  </NumBox>
                </LayerRow>
                <LayerList>
                  <LayerRows>
                    <Layer $h={20} $mt={-6}>
                      <EyeCell><Eye /></EyeCell>
                      <LayerBody $pl={5}><Chevron />&nbsp;<FolderIco /><GroupName>Down_Line</GroupName></LayerBody>
                    </Layer>
                    {["Rounded Rectangle 9", "Rounded Rectangle 9 copy", "Rounded Rectangle 9 copy 3", "Rounded Rectangle 9 copy 2"].map((n) => (
                      <Layer key={n} $h={39} $pt={2}>
                        <EyeCell><Eye /></EyeCell>
                        <LayerBody $pl={20}><LineThumb />{n}</LayerBody>
                      </Layer>
                    ))}
                    <Layer $h={23}>
                      <EyeCell><Eye /></EyeCell>
                      <LayerBody $pl={5} $sel><Chevron />&nbsp;<FolderIco open /><GroupName>Update Profile _ Down Icon</GroupName></LayerBody>
                    </Layer>
                  </LayerRows>
                  <ListScroll>
                    <Chevron up c="#7b7b7b" />
                    <ScrollThumb />
                    <ScrollDown><Chevron c="#8a8a8a" /></ScrollDown>
                  </ListScroll>
                </LayerList>
                <LayerFooter>
                  <IconCell $w={16} $dim><Svg s={15} strokeWidth="1.500"><path d="M10 8H6a4 4 0 000 8h4M14 8h4a4 4 0 010 8h-4M8 12h8" /></Svg></IconCell>
                  <IconCell $w={16} $ml={11} style={{ fontFamily: "'Liberation Serif', serif", fontStyle: "italic", fontSize: 14 }}>fx</IconCell>
                  <IconCell $w={16} $ml={10}><Svg s={15} stroke="none"><path fillRule="evenodd" fill="currentColor" d="M2 4h20v16H2zM12 7a5 5 0 100 10 5 5 0 000-10z" /></Svg></IconCell>
                  <IconCell $w={16} $ml={12}><Svg s={15} stroke="none"><circle cx="12" cy="12" r="10" fill="currentColor" /><path d="M5 19L19 5a10 10 0 00-14 14z" fill="#535353" /></Svg></IconCell>
                  <IconCell $w={16} $ml={11}><Svg s={15} stroke="none">{F("M2 4h8l2 2h10v14H2z")}</Svg></IconCell>
                  <IconCell $w={16} $ml={11}><Svg s={15} strokeWidth="1.600"><rect x="3" y="3" width="18" height="18" /><path d="M12 8v8M8 12h8" /></Svg></IconCell>
                  <IconCell $w={16} $ml={10}><Svg s={15} strokeWidth="1.500"><path d="M3 6h18M8 6V3h8v3M5 6l1 16h12l1-16M10 9v10M14 9v10" /></Svg></IconCell>
                </LayerFooter>
              </Panel>
            </MainPanels>

            <RightDock>
              <DockTile $h={42}>
                <Grip $h={14} $w={20} />
                <DockBody $pl={10} $gap={7}>
                  <Svg s={20} strokeWidth="1.200"><path d="M8 15a7 7 0 118 0v3H8z" />{F("M8 18h8v2l-2 3h-4l-2-3z")}</Svg>
                  Learn
                </DockBody>
              </DockTile>
              <DockTile $h={41}>
                <Grip $h={14} $w={20} />
                <DockBody $pl={10} $gap={9}>
                  <Svg s={18} strokeWidth="1.200"><path d="M3 7v15h15M7 2h15v17H7z" />{F("M14 2h5v10l-2.500-2-2.500 2z")}</Svg>
                  Librari...
                </DockBody>
              </DockTile>
            </RightDock>
          </DockRow>
        </SideArea>
      </Workspace>

      <Taskbar>
        <TaskIcon><WinLogo /></TaskIcon>
        <TaskIcon><TaskSearch /></TaskIcon>
        <TaskIcon><TaskView /></TaskIcon>
        <TaskIcon $dot="#9a9ea4"><Explorer /></TaskIcon>
        <TaskIcon><Store /></TaskIcon>
        <TaskIcon><Diamond /></TaskIcon>
        <TaskIcon $dot="#9a9ea4"><Edge /></TaskIcon>
        <TaskIcon><Chrome /></TaskIcon>
        <TaskIcon $bg="#42282c" $dot="#e79aa6"><Discord /></TaskIcon>
        <TaskIcon $dot="#9a9ea4"><VsLogo /></TaskIcon>
        <TaskIcon $dot="#9a9ea4"><FaWhatsapp size={27} color="#46c95a" /><Badge>1</Badge></TaskIcon>
        <TaskIcon $dot="#9a9ea4"><UnityTile><FaUnity size={13} /></UnityTile></TaskIcon>
        <TaskIcon $bg="#2a3440" $dot="#a8acb2" $wide><PsTile>Ps</PsTile></TaskIcon>
        <Tray>
          <TrayCell $w={36}><Svg s={14} strokeWidth="1.500"><path d="M2 16l10-9 10 9" /></Svg></TrayCell>
          <TrayCell $w={20}><Svg s={16} strokeWidth="1.400"><rect x="8" y="2" width="8" height="13" rx="4" /><path d="M4 12a8 8 0 0016 0M12 20v3" /></Svg></TrayCell>
          <TrayText $w={56} $align="center">ENG<br />IN</TrayText>
          <TrayCell $w={20}><Svg s={17} strokeWidth="1.700"><path d="M1.500 9a15 15 0 0121 0M5 13a10 10 0 0114 0M8.500 16.500a5 5 0 017 0" /><circle cx="12" cy="20" r="1.300" fill="currentColor" /></Svg></TrayCell>
          <TrayCell $w={26}><Svg s={16} strokeWidth="1.300"><path d="M2 9v6h4l5 5V4L6 9zM15 8a6 6 0 010 8M18 5a10 10 0 010 14" /></Svg></TrayCell>
          <TrayCell $w={22}><Svg s={17} strokeWidth="1.300"><rect x="7" y="7" width="15" height="11" rx="2" fill="currentColor" /><path d="M1 12h5M3 8v8M23.500 11v3" /></Svg></TrayCell>
          <TrayText $w={75} $align="right">14:46<br />26-07-2022</TrayText>
          <TrayCell $w={44} $pr={10}><Svg s={15} strokeWidth="1.300"><path d="M14 2a10 10 0 11-12 13c7 2 13-5 12-13z" /></Svg></TrayCell>
        </Tray>
      </Taskbar>
    </Page>
  );
}
